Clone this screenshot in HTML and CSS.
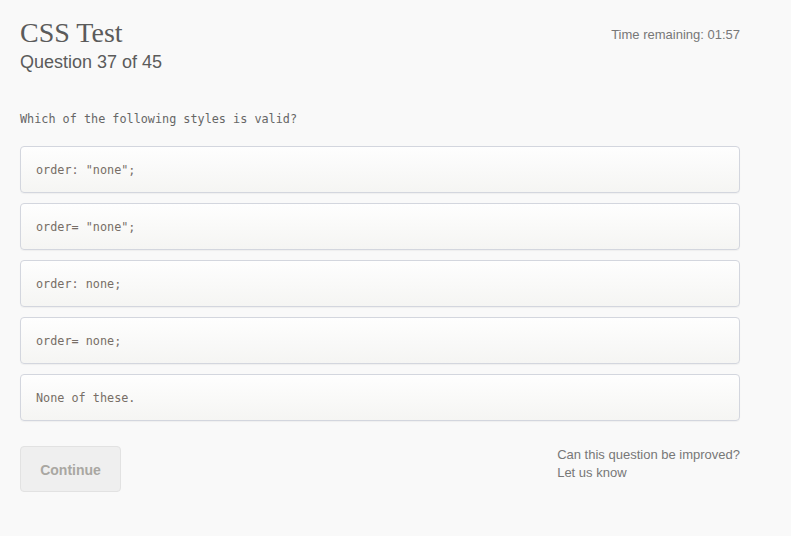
FILE: index.html
```html
<!DOCTYPE html>
<html>
<head>
<meta charset="utf-8">
<link rel="stylesheet" href="styles.css">
</head>
<body>
<div class="page">
  <header class="header">
    <div class="titles">
      <h1 class="title">CSS Test</h1>
      <div class="subtitle">Question 37 of 45</div>
    </div>
    <div class="timer">Time remaining: 01:57</div>
  </header>
  <p class="question">Which of the following styles is valid?</p>
  <div class="options">
    <div class="option">order: "none";</div>
    <div class="option">order= "none";</div>
    <div class="option">order: none;</div>
    <div class="option">order= none;</div>
    <div class="option">None of these.</div>
  </div>
  <div class="footer">
    <button class="continue">Continue</button>
    <div class="feedback">Can this question be improved?<br>Let us know</div>
  </div>
</div>
</body>
</html>
```
FILE: styles.css
```css
html, body {
  margin: 0;
  padding: 0;
  background: #f9f9f9;
}
.page {
  width: 720px;
  padding: 16px 0 0 20px;
  font-family: "Liberation Sans", Arial, sans-serif;
}
.header {
  display: flex;
  justify-content: space-between;
  align-items: flex-start;
}
.title {
  margin: 0;
  font-family: "Liberation Serif", "Times New Roman", serif;
  font-weight: normal;
  font-size: 28px;
  line-height: 34px;
  color: #5b5b5b;
}
.subtitle {
  font-size: 18px;
  line-height: 24px;
  color: #5b5b5b;
}
.timer {
  font-size: 13px;
  line-height: 16px;
  color: #777;
  margin-top: 11px;
}
.question {
  margin: 37px 0 0 0;
  font-family: "DejaVu Sans Mono", monospace;
  font-size: 11.8px;
  line-height: 16px;
  color: #666;
}
.options {
  margin-top: 19px;
  display: flex;
  flex-direction: column;
  gap: 10px;
}
.option {
  box-sizing: border-box;
  height: 47px;
  padding: 0 15px;
  display: flex;
  align-items: center;
  border: 1px solid #d3d6de;
  border-radius: 4px;
  background: linear-gradient(#fefefe, #f5f5f3);
  box-shadow: 0 1px 1px rgba(0,0,0,0.04);
  font-family: "DejaVu Sans Mono", monospace;
  font-size: 11.8px;
  color: #776e66;
}
.footer {
  margin-top: 25px;
  display: flex;
  justify-content: space-between;
  align-items: flex-start;
}
.continue {
  width: 101px;
  height: 46px;
  border: 1px solid #e2e2e2;
  border-radius: 4px;
  background: #efefef;
  font-family: "Liberation Sans", Arial, sans-serif;
  font-weight: bold;
  font-size: 14px;
  color: #a9a7a2;
  padding: 2px 0 0 0;
}
.feedback {
  font-size: 13px;
  line-height: 18px;
  color: #777;
}
```
